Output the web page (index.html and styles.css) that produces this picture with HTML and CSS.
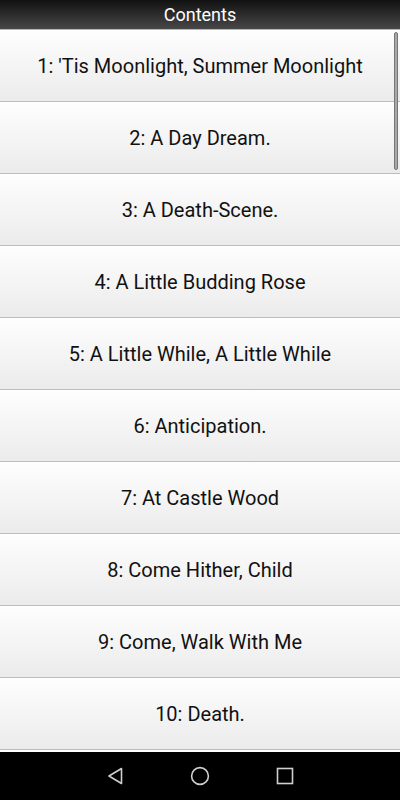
FILE: index.html
```html
<!DOCTYPE html>
<html lang="en">
<head>
    <meta charset="UTF-8">
    <meta name="viewport" content="width=device-width, initial-scale=1.0">
    <title>Contents</title>
    <link rel="stylesheet" href="styles.css">
</head>
<body>
    <div class="screen">
        <div class="header">Contents</div>
        <div class="list">
            <div class="item">1: 'Tis Moonlight, Summer Moonlight</div>
            <div class="item">2: A Day Dream.</div>
            <div class="item">3: A Death-Scene.</div>
            <div class="item">4: A Little Budding Rose</div>
            <div class="item">5: A Little While, A Little While</div>
            <div class="item">6: Anticipation.</div>
            <div class="item">7: At Castle Wood</div>
            <div class="item">8: Come Hither, Child</div>
            <div class="item">9: Come, Walk With Me</div>
            <div class="item">10: Death.</div>
            <div class="scrollbar"></div>
        </div>
        <div class="navbar">
            <svg width="18" height="20" viewBox="0 0 18 20">
                <path d="M15.5 2.5 L3 10 L15.5 17.5 Z" fill="none" stroke="#cfcfcf" stroke-width="1.6" stroke-linejoin="round"/>
            </svg>
            <svg width="20" height="20" viewBox="0 0 20 20">
                <circle cx="10" cy="10" r="8.4" fill="none" stroke="#cfcfcf" stroke-width="1.6"/>
            </svg>
            <svg width="18" height="18" viewBox="0 0 18 18">
                <rect x="1.5" y="1.5" width="15" height="15" fill="none" stroke="#cfcfcf" stroke-width="1.6"/>
            </svg>
        </div>
    </div>
</body>
</html>
```

FILE: styles.css
```css
body {
    margin: 0;
    padding: 0;
    font-family: Roboto, "Noto Sans", sans-serif;
    background-color: #fff;
}
.screen {
    width: 400px;
    height: 800px;
    display: flex;
    flex-direction: column;
    overflow: hidden;
}
.header {
    flex-shrink: 0;
    background: linear-gradient(#111, #474747);
    border-bottom: 1px solid #b8b8b8;
    color: #fff;
    font-size: 18px;
    text-align: center;
    line-height: 30px;
    box-sizing: border-box;
    height: 30px;
}
.list {
    flex: 1;
    overflow: hidden;
    position: relative;
}
.item {
    height: 71px;
    border-bottom: 1px solid #bcbcbc;
    background: linear-gradient(#fefefe, #ebebeb);
    display: flex;
    align-items: center;
    justify-content: center;
    font-size: 20px;
    color: #111;
}
.scrollbar {
    position: absolute;
    top: 2px;
    right: 2px;
    width: 4px;
    height: 138px;
    background-color: #a8a8a8;
    border: 1px solid #777;
    border-radius: 3px;
    box-sizing: border-box;
}
.navbar {
    height: 48px;
    flex-shrink: 0;
    background-color: #000;
    display: flex;
    justify-content: center;
    align-items: center;
    gap: 66px;
}
```
